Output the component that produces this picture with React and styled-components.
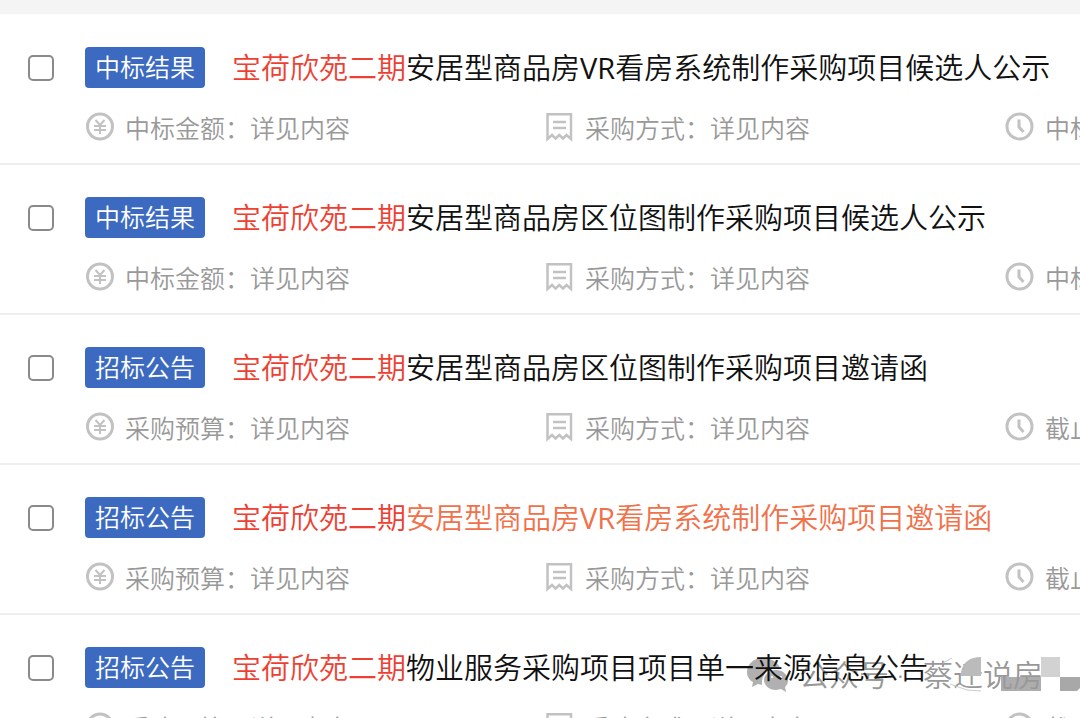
import React from "react";
import styled, { createGlobalStyle } from "styled-components";

const GlobalStyle = createGlobalStyle`
  * { box-sizing: border-box; }
  html, body { margin: 0; background: #fff; }
  body {
    font-family: "Open Sans", "Noto Sans CJK SC", sans-serif;
    font-weight: 350;
    overflow: hidden;
    height: 100vh;
  }
`;

const Page = styled.main`
  position: relative;
  isolation: isolate;
`;

const TopStrip = styled.div`
  height: 15px;
  background: #f4f4f4;
  border-bottom: 1px solid #fcfcfc;
`;

const List = styled.ul`
  list-style: none;
  margin: 0;
  padding: 0;
`;

const Row = styled.li`
  display: flex;
  padding: 32px 0 18px 28px;
  border-bottom: 2px solid #eee;
  overflow: hidden;
`;

const Check = styled.input`
  appearance: none;
  flex: none;
  width: 26px;
  height: 26px;
  margin: 8px 31px 0 0;
  border: 2px solid #8a8a8a;
  border-radius: 5px;
  background: #fff;
  &:checked { background: #3c6ac1; }
`;

const Body = styled.div`
  flex: 1;
  min-width: 0;
`;

const Heading = styled.div`
  display: flex;
  align-items: center;
  gap: 27px;
  height: 41px;
  white-space: nowrap;
`;

const Tag = styled.span`
  flex: none;
  padding: 0 10px;
  border-radius: 4px;
  background: #3c6ac1;
  color: #fff;
  font-size: 25px;
  line-height: 41px;
`;

const Title = styled.a`
  color: ${(p) => (p.$active ? "#f0714a" : "#111")};
  font-size: 29px;
  line-height: 41px;
  text-decoration: none;
`;

const Keyword = styled.span`
  color: #ee3f33;
`;

const Latin = styled.span`
  font-weight: 400;
`;

const Meta = styled.div`
  display: grid;
  grid-template-columns: repeat(3, 460px);
  margin-top: 24px;
`;

const MetaItem = styled.span`
  display: flex;
  align-items: flex-start;
  gap: 10px;
  color: #999;
  font-size: 25px;
  line-height: 33px;
  white-space: nowrap;
`;

const Icon = styled.svg`
  flex: none;
  width: 30px;
  height: 30px;
  fill: none;
  stroke: #c2c2c2;
  stroke-width: 3;
`;

const Watermark = styled.div`
  position: absolute;
  z-index: -1;
  top: 650px;
  right: 0;
  display: flex;
  align-items: center;
  color: #555;
  opacity: 0.6;
  font-size: 30px;
  line-height: 50px;
  white-space: nowrap;
  pointer-events: none;
`;

const WechatMark = styled.svg`
  width: 42px;
  height: 36px;
  margin-right: 10px;
`;

const Account = styled.span`
  position: relative;
  padding-right: 37px;
  margin-left: 19px;
`;

const Mosaic = styled.svg`
  position: absolute;
  right: 0;
  top: 6px;
  width: 140px;
  height: 38px;
`;

const YenIcon = () => (
  <Icon viewBox="0 0 30 30" aria-hidden="true">
    <circle cx="15" cy="14.5" r="12.5" />
    <path strokeWidth="2" d="M10.5 8l4.500 5 4.500-5M9 14h12M9 18h12M15 13v9" />
  </Icon>
);

const ReceiptIcon = () => (
  <Icon viewBox="0 0 30 30" aria-hidden="true">
    <path strokeWidth="2.500" d="M2.500 27V2.200h23.500V27l-4.500-4-3.500 3.500-3.700-3.500-3.700 3.500L7 23z" />
    <path d="M8 10h13M8 16h13" strokeWidth="2.500" />
  </Icon>
);

const ClockIcon = () => (
  <Icon viewBox="0 0 30 30" aria-hidden="true">
    <circle cx="14.500" cy="14.5" r="12.500" />
    <path d="M14 7.500v7.500l4.500 5" />
  </Icon>
);

const ROWS = [
  { tag: "中标结果", rest: "安居型商品房VR看房系统制作采购项目候选人公示", amount: "中标金额", time: "中标" },
  { tag: "中标结果", rest: "安居型商品房区位图制作采购项目候选人公示", amount: "中标金额", time: "中标" },
  { tag: "招标公告", rest: "安居型商品房区位图制作采购项目邀请函", amount: "采购预算", time: "截止" },
  { tag: "招标公告", rest: "安居型商品房VR看房系统制作采购项目邀请函", amount: "采购预算", time: "截止", active: true },
  { tag: "招标公告", rest: "物业服务采购项目项目单一来源信息公告", amount: "采购预算", time: "截止" },
];

function Notice({ item }) {
  return (
    <Row>
      <Check type="checkbox" aria-label={"宝荷欣苑二期" + item.rest} />
      <Body>
        <Heading>
          <Tag>{item.tag}</Tag>
          <Title href="#" $active={item.active}>
            <Keyword>宝荷欣苑二期</Keyword>
            {item.rest.split(/([A-Z]+)/).map((part, i) =>
              i % 2 ? <Latin key={i}>{part}</Latin> : part
            )}
          </Title>
        </Heading>
        <Meta>
          <MetaItem><YenIcon />{item.amount}：详见内容</MetaItem>
          <MetaItem><ReceiptIcon />采购方式：详见内容</MetaItem>
          <MetaItem><ClockIcon />{item.time}</MetaItem>
        </Meta>
      </Body>
    </Row>
  );
}

export default function App() {
  return (
    <Page>
      <GlobalStyle />
      <TopStrip />
      <List>
        {ROWS.map((item, i) => <Notice key={i} item={item} />)}
      </List>
      <Watermark>
        <WechatMark viewBox="0 0 42 36" aria-hidden="true">
          <path fill="#7d7d7d" d="M16 1C7 1 0 7 0 15c0 4 2 8 6 10l-1 5 6-3 4 1C14 18 21 10 33 11 31 5 24 1 16 1z" />
          <path fill="#7d7d7d" d="M29 13c-7 0-12 5-12 10s5 10 12 10l5-1 5 3-1-5c2-2 3-4 3-7 0-5-5-10-12-10z" />
          <g fill="#fff">
            <circle cx="25" cy="20" r="1" />
            <circle cx="34" cy="20" r="1" />
          </g>
        </WechatMark>
        公众号 ·
        <Account>
          <Mosaic viewBox="0 0 140 38" aria-hidden="true">
            <path fill="#8f8f8f" d="M21 20V16C23 6 30 1 41 1v19z" />
            <path fill="none" stroke="#aaa" strokeWidth="1" d="M3 7l9-5M10 28l17 6 14 1" />
            <path fill="#555" opacity="0.8" d="M61 21h40v14H61z" />
            <path fill="#b5b5b5" d="M101 1h19v20h-19z" />
            <path fill="#707070" d="M120 21h20v11l-3 3h-17z" />
          </Mosaic>
          蔡迁说房
        </Account>
      </Watermark>
    </Page>
  );
}
